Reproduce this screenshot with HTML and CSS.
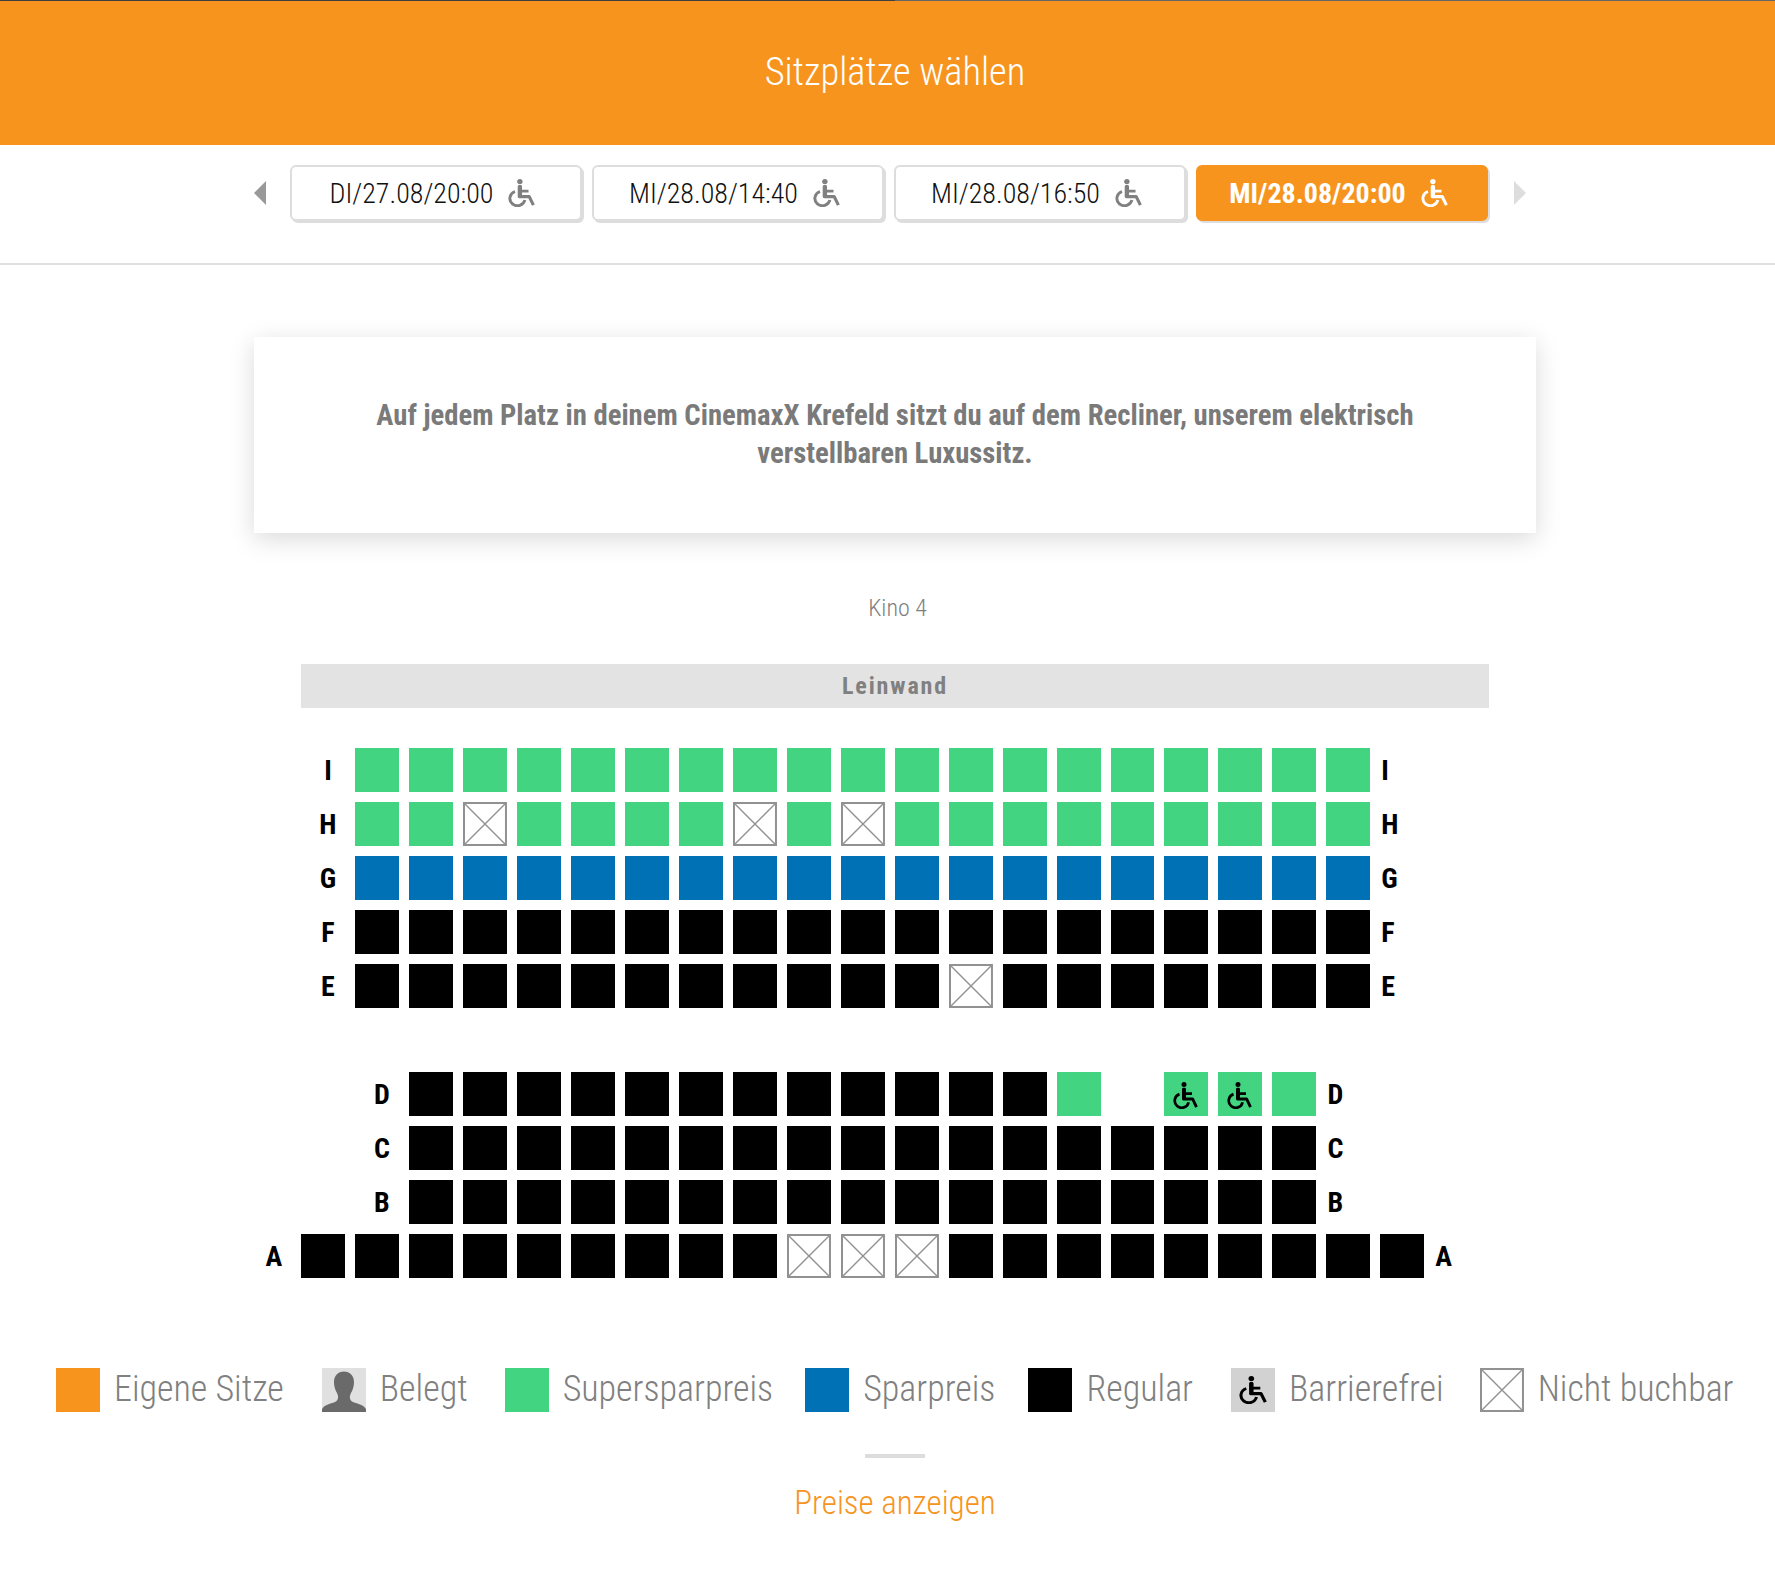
FILE: index.html
```html
<!DOCTYPE html>
<html lang="de">
<head>
<meta charset="utf-8">
<title>Sitzplätze wählen</title>
<link rel="stylesheet" href="styles.css">
</head>
<body>
<svg class="defs" width="0" height="0" aria-hidden="true">
  <symbol id="wheel" viewBox="0 0 25 27" preserveAspectRatio="none">
    <circle cx="11" cy="2.500" r="2.500" fill="currentColor"/>
    <path d="M9 7.200C9 6.400 9.600 5.800 10.400 5.800H11.600C12.400 5.800 13 6.400 13 7.200V10.300H19V13H13V15.500H19.500C20.200 15.500 20.700 15.800 21 16.500L24.800 24.600L22.200 25.800L18.800 18.500H10.400C9.600 18.500 9 17.900 9 17.100Z" fill="currentColor"/>
    <path d="M6.500 12.100A7 7 0 1 0 15.600 20.200" fill="none" stroke="currentColor" stroke-width="2.700"/>
  </symbol>
  <symbol id="cross" viewBox="0 0 44 44">
    <rect x="1" y="1" width="42" height="42" fill="#fff" stroke="#919191" stroke-width="2"/>
    <path d="M1.500 1.500l41 41M42.500 1.500l-41 41" stroke="#919191" stroke-width="1.400"/>
  </symbol>
</svg>

<header class="topbar"><h1 class="title">Sitzplätze wählen</h1></header>

<nav class="tabs">
  <span class="arrow arrow-left"></span>
  <a class="tab">DI/27.08/20:00<svg class="tab-icon"><use href="#wheel"/></svg></a>
  <a class="tab">MI/28.08/14:40<svg class="tab-icon"><use href="#wheel"/></svg></a>
  <a class="tab">MI/28.08/16:50<svg class="tab-icon"><use href="#wheel"/></svg></a>
  <a class="tab tab-active">MI/28.08/20:00<svg class="tab-icon"><use href="#wheel"/></svg></a>
  <span class="arrow arrow-right"></span>
</nav>

<section class="notice"><p>Auf jedem Platz in deinem CinemaxX Krefeld sitzt du auf dem Recliner, unserem elektrisch<br>verstellbaren Luxussitz.</p></section>

<p class="hall">Kino 4</p>

<div class="screen">Leinwand</div>

<div class="map">
  <div class="row"><i class="c"></i><b class="c lab l">I</b><i class="c"><u class="s g"></u></i><i class="c"><u class="s g"></u></i><i class="c"><u class="s g"></u></i><i class="c"><u class="s g"></u></i><i class="c"><u class="s g"></u></i><i class="c"><u class="s g"></u></i><i class="c"><u class="s g"></u></i><i class="c"><u class="s g"></u></i><i class="c"><u class="s g"></u></i><i class="c"><u class="s g"></u></i><i class="c"><u class="s g"></u></i><i class="c"><u class="s g"></u></i><i class="c"><u class="s g"></u></i><i class="c"><u class="s g"></u></i><i class="c"><u class="s g"></u></i><i class="c"><u class="s g"></u></i><i class="c"><u class="s g"></u></i><i class="c"><u class="s g"></u></i><i class="c"><u class="s g"></u></i><b class="c lab r">I</b></div>
  <div class="row"><i class="c"></i><b class="c lab l">H</b><i class="c"><u class="s g"></u></i><i class="c"><u class="s g"></u></i><i class="c"><svg class="s"><use href="#cross"/></svg></i><i class="c"><u class="s g"></u></i><i class="c"><u class="s g"></u></i><i class="c"><u class="s g"></u></i><i class="c"><u class="s g"></u></i><i class="c"><svg class="s"><use href="#cross"/></svg></i><i class="c"><u class="s g"></u></i><i class="c"><svg class="s"><use href="#cross"/></svg></i><i class="c"><u class="s g"></u></i><i class="c"><u class="s g"></u></i><i class="c"><u class="s g"></u></i><i class="c"><u class="s g"></u></i><i class="c"><u class="s g"></u></i><i class="c"><u class="s g"></u></i><i class="c"><u class="s g"></u></i><i class="c"><u class="s g"></u></i><i class="c"><u class="s g"></u></i><b class="c lab r">H</b></div>
  <div class="row"><i class="c"></i><b class="c lab l">G</b><i class="c"><u class="s bl"></u></i><i class="c"><u class="s bl"></u></i><i class="c"><u class="s bl"></u></i><i class="c"><u class="s bl"></u></i><i class="c"><u class="s bl"></u></i><i class="c"><u class="s bl"></u></i><i class="c"><u class="s bl"></u></i><i class="c"><u class="s bl"></u></i><i class="c"><u class="s bl"></u></i><i class="c"><u class="s bl"></u></i><i class="c"><u class="s bl"></u></i><i class="c"><u class="s bl"></u></i><i class="c"><u class="s bl"></u></i><i class="c"><u class="s bl"></u></i><i class="c"><u class="s bl"></u></i><i class="c"><u class="s bl"></u></i><i class="c"><u class="s bl"></u></i><i class="c"><u class="s bl"></u></i><i class="c"><u class="s bl"></u></i><b class="c lab r">G</b></div>
  <div class="row"><i class="c"></i><b class="c lab l">F</b><i class="c"><u class="s k"></u></i><i class="c"><u class="s k"></u></i><i class="c"><u class="s k"></u></i><i class="c"><u class="s k"></u></i><i class="c"><u class="s k"></u></i><i class="c"><u class="s k"></u></i><i class="c"><u class="s k"></u></i><i class="c"><u class="s k"></u></i><i class="c"><u class="s k"></u></i><i class="c"><u class="s k"></u></i><i class="c"><u class="s k"></u></i><i class="c"><u class="s k"></u></i><i class="c"><u class="s k"></u></i><i class="c"><u class="s k"></u></i><i class="c"><u class="s k"></u></i><i class="c"><u class="s k"></u></i><i class="c"><u class="s k"></u></i><i class="c"><u class="s k"></u></i><i class="c"><u class="s k"></u></i><b class="c lab r">F</b></div>
  <div class="row"><i class="c"></i><b class="c lab l">E</b><i class="c"><u class="s k"></u></i><i class="c"><u class="s k"></u></i><i class="c"><u class="s k"></u></i><i class="c"><u class="s k"></u></i><i class="c"><u class="s k"></u></i><i class="c"><u class="s k"></u></i><i class="c"><u class="s k"></u></i><i class="c"><u class="s k"></u></i><i class="c"><u class="s k"></u></i><i class="c"><u class="s k"></u></i><i class="c"><u class="s k"></u></i><i class="c"><svg class="s"><use href="#cross"/></svg></i><i class="c"><u class="s k"></u></i><i class="c"><u class="s k"></u></i><i class="c"><u class="s k"></u></i><i class="c"><u class="s k"></u></i><i class="c"><u class="s k"></u></i><i class="c"><u class="s k"></u></i><i class="c"><u class="s k"></u></i><b class="c lab r">E</b></div>
  <div class="row"></div>
  <div class="row"><i class="c"></i><i class="c"></i><b class="c lab l">D</b><i class="c"><u class="s k"></u></i><i class="c"><u class="s k"></u></i><i class="c"><u class="s k"></u></i><i class="c"><u class="s k"></u></i><i class="c"><u class="s k"></u></i><i class="c"><u class="s k"></u></i><i class="c"><u class="s k"></u></i><i class="c"><u class="s k"></u></i><i class="c"><u class="s k"></u></i><i class="c"><u class="s k"></u></i><i class="c"><u class="s k"></u></i><i class="c"><u class="s k"></u></i><i class="c"><u class="s g"></u></i><i class="c"></i><i class="c"><span class="s g wc"><svg class="seat-icon"><use href="#wheel"/></svg></span></i><i class="c"><span class="s g wc"><svg class="seat-icon"><use href="#wheel"/></svg></span></i><i class="c"><u class="s g"></u></i><b class="c lab r">D</b></div>
  <div class="row"><i class="c"></i><i class="c"></i><b class="c lab l">C</b><i class="c"><u class="s k"></u></i><i class="c"><u class="s k"></u></i><i class="c"><u class="s k"></u></i><i class="c"><u class="s k"></u></i><i class="c"><u class="s k"></u></i><i class="c"><u class="s k"></u></i><i class="c"><u class="s k"></u></i><i class="c"><u class="s k"></u></i><i class="c"><u class="s k"></u></i><i class="c"><u class="s k"></u></i><i class="c"><u class="s k"></u></i><i class="c"><u class="s k"></u></i><i class="c"><u class="s k"></u></i><i class="c"><u class="s k"></u></i><i class="c"><u class="s k"></u></i><i class="c"><u class="s k"></u></i><i class="c"><u class="s k"></u></i><b class="c lab r">C</b></div>
  <div class="row"><i class="c"></i><i class="c"></i><b class="c lab l">B</b><i class="c"><u class="s k"></u></i><i class="c"><u class="s k"></u></i><i class="c"><u class="s k"></u></i><i class="c"><u class="s k"></u></i><i class="c"><u class="s k"></u></i><i class="c"><u class="s k"></u></i><i class="c"><u class="s k"></u></i><i class="c"><u class="s k"></u></i><i class="c"><u class="s k"></u></i><i class="c"><u class="s k"></u></i><i class="c"><u class="s k"></u></i><i class="c"><u class="s k"></u></i><i class="c"><u class="s k"></u></i><i class="c"><u class="s k"></u></i><i class="c"><u class="s k"></u></i><i class="c"><u class="s k"></u></i><i class="c"><u class="s k"></u></i><b class="c lab r">B</b></div>
  <div class="row"><b class="c lab l">A</b><i class="c"><u class="s k"></u></i><i class="c"><u class="s k"></u></i><i class="c"><u class="s k"></u></i><i class="c"><u class="s k"></u></i><i class="c"><u class="s k"></u></i><i class="c"><u class="s k"></u></i><i class="c"><u class="s k"></u></i><i class="c"><u class="s k"></u></i><i class="c"><u class="s k"></u></i><i class="c"><svg class="s"><use href="#cross"/></svg></i><i class="c"><svg class="s"><use href="#cross"/></svg></i><i class="c"><svg class="s"><use href="#cross"/></svg></i><i class="c"><u class="s k"></u></i><i class="c"><u class="s k"></u></i><i class="c"><u class="s k"></u></i><i class="c"><u class="s k"></u></i><i class="c"><u class="s k"></u></i><i class="c"><u class="s k"></u></i><i class="c"><u class="s k"></u></i><i class="c"><u class="s k"></u></i><i class="c"><u class="s k"></u></i><b class="c lab r">A</b></div>
</div>

<div class="legend">
  <div class="item"><u class="s o"></u>Eigene Sitze</div>
  <div class="item trim-1"><svg class="s" viewBox="0 0 44 44"><rect width="44" height="44" fill="#e0e0e0"/><path d="M0 44V41C2 37 8 36 13 34C17 32 16.500 28 15 25C13 22 12 18 12 14C12 8 16 3.500 22 3.500C28 3.500 32 8 32 14C32 18 31 22 29 25C27.500 28 27 32 31 34C36 36 42 37 44 41V44Z" fill="#6b6a6a"/></svg>Belegt</div>
  <div class="item trim-6"><u class="s g"></u>Supersparpreis</div>
  <div class="item trim-5"><u class="s bl"></u>Sparpreis</div>
  <div class="item"><u class="s k"></u>Regular</div>
  <div class="item trim-2"><span class="s wc wc-legend"><svg class="seat-icon"><use href="#wheel"/></svg></span>Barrierefrei</div>
  <div class="item"><svg class="s"><use href="#cross"/></svg>Nicht buchbar</div>
</div>

<div class="rule"></div>
<a class="prices">Preise anzeigen</a>
</body>
</html>
```

FILE: styles.css
```css
html { overflow-x: hidden; background: #fff; }
body { margin: 0; width: 1790px; font-family: "Roboto Condensed", Roboto, sans-serif; font-stretch: condensed; color: #808080; }
.defs { position: absolute; }

.topbar { height: 145px; background: linear-gradient(90deg, #3f3f3f 895px, #666 895px) 0 0 / 100% 1px no-repeat, #f7941e; display: flex; align-items: center; justify-content: center; }
.title { margin: 0 0 3px; font-size: 38.5px; font-weight: 300; color: #fff; }

.tabs { height: 98px; padding: 20px 11px 0 0; border-bottom: 2px solid #e0e0e0; display: flex; align-items: flex-start; justify-content: center; gap: 8px; }
.arrow { width: 0; height: 0; border-style: solid; border-width: 12px 0; border-color: transparent; margin-top: 16px; }
.arrow-left { border-right: 12px solid #999; margin-right: 16px; }
.arrow-right { border-left: 12px solid #ddd; margin-left: 16px; }
.tab { box-sizing: border-box; width: 292px; height: 56px; margin-right: 2px; padding-right: 6px; border: 2px solid #ddd; border-radius: 6px; box-shadow: 2px 2px 0 #ddd; background: #fff; color: #111; font-size: 28px; font-weight: 300; display: flex; align-items: center; justify-content: center; gap: 15px; }
.tab-active { background: #f7941e; border-color: #f7941e; color: #fff; font-weight: 700; }
.tab-icon { width: 27px; height: 28px; color: #808080; }
.tab-active .tab-icon { color: #fff; }

.notice { width: 1282px; height: 196px; margin: 72px auto 0; background: #fff; box-shadow: 0 6px 24px rgba(0,0,0,.15); display: flex; align-items: center; justify-content: center; text-align: center; }
.notice p { margin: 0 0 2px; font-size: 28.7px; line-height: 38.5px; font-weight: 700; color: #7a7a7a; }

.hall { margin: 57px 0 0; padding-left: 5px; text-align: center; font-size: 24px; line-height: 36px; font-weight: 300; }
.screen { width: 1188px; height: 44px; margin: 38px auto 0; background: #e3e3e3; text-align: center; font-size: 24px; line-height: 44px; font-weight: 700; letter-spacing: 1.9px; }

.map { width: 1296px; margin: 40px auto 0; display: flex; flex-direction: column; gap: 10px; }
.row { display: flex; height: 44px; }
.c { flex: 0 0 53.9715px; display: block; }
.s { display: block; flex: none; width: 43.97px; height: 44px; text-decoration: none; }
.g { background: #43d481; }
.bl { background: #0071b4; }
.k { background: #000; }
.o { background: #f7941e; }
.lab { font-size: 28px; line-height: 46px; font-weight: 700; color: #000; }
.lab.l { text-align: center; }
.lab.r { padding-left: 1px; box-sizing: border-box; }
.wc { display: flex; align-items: center; justify-content: center; color: #000; }
.wc-legend { background: #d2d2d2; }
.seat-icon { width: 25px; height: 27px; margin: 2px 2px 0 0; }
.wc-legend .seat-icon { width: 28px; height: 28px; margin: 0; }

.legend { margin-top: 90px; padding-left: 56px; display: flex; gap: 38px; }
.item { display: flex; align-items: flex-start; gap: 14px; height: 44px; font-size: 36px; line-height: 42px; font-weight: 300; white-space: nowrap; }
.trim-1 { margin-right: -1px; }
.trim-2 { margin-right: -2px; }
.trim-5 { margin-right: -5px; }
.trim-6 { margin-right: -6px; }
.rule { width: 60px; height: 4px; margin: 42px auto 0; background: #ddd; }
.prices { display: block; margin-top: 25px; text-align: center; color: #f7941e; font-size: 33px; line-height: 40px; font-weight: 300; }
```
